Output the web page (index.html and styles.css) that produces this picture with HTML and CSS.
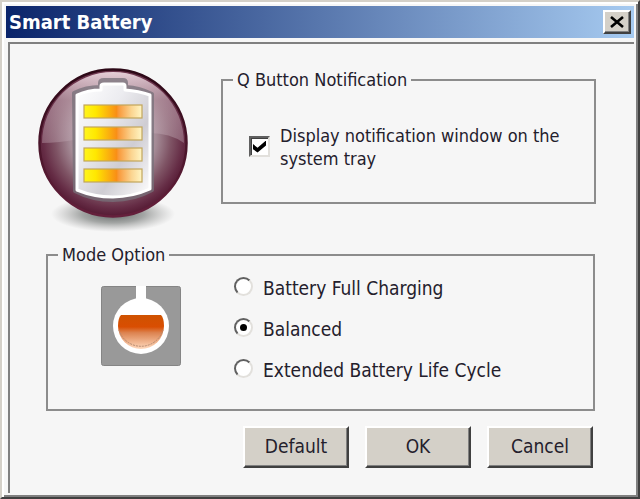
FILE: index.html
```html
<!DOCTYPE html>
<html lang="en">
<head>
  <meta charset="UTF-8">
  <title>Smart Battery</title>
  <meta name="viewport" content="width=device-width, initial-scale=1.0">
  <link rel="stylesheet" href="styles.css">
</head>
<body>
  <div class="window">
    <header class="title-bar">
      <h1>Smart Battery</h1>
      <button type="button" class="close" aria-label="Close">
        <svg width="14" height="12" viewBox="0 0 14 12"><path d="M1 1L13 11M13 1L1 11" stroke="#000" stroke-width="2.6"/></svg>
      </button>
    </header>

    <form class="panel">
      <div class="top">
        <svg class="battery" width="150" height="164" viewBox="0 0 150 164" aria-hidden="true">
          <defs>
            <radialGradient id="shadow">
              <stop offset="0" stop-color="#555b59" stop-opacity=".95"/>
              <stop offset=".5" stop-color="#777b79" stop-opacity=".65"/>
              <stop offset="1" stop-color="#999" stop-opacity="0"/>
            </radialGradient>
            <radialGradient id="ball" cx=".5" cy=".47" r=".53">
              <stop offset="0" stop-color="#b8a4ae"/>
              <stop offset=".55" stop-color="#a58c97"/>
              <stop offset=".74" stop-color="#7f5465"/>
              <stop offset=".9" stop-color="#652c45"/>
              <stop offset="1" stop-color="#541a33"/>
            </radialGradient>
            <linearGradient id="gloss" x1="0" y1="0" x2="0" y2="1">
              <stop offset="0" stop-color="#f3dfe6" stop-opacity=".9"/>
              <stop offset=".4" stop-color="#d0b8c2" stop-opacity=".55"/>
              <stop offset="1" stop-color="#bfa5b1" stop-opacity=".4"/>
            </linearGradient>
            <linearGradient id="rim" x1="0" y1="0" x2="0" y2="1">
              <stop offset="0" stop-color="#2c0816"/>
              <stop offset="1" stop-color="#65203c"/>
            </linearGradient>
            <linearGradient id="shell" x1="0" y1="0" x2="1" y2="1">
              <stop offset="0" stop-color="#fff"/>
              <stop offset=".35" stop-color="#ececf0"/>
              <stop offset=".65" stop-color="#cfcdd3"/>
              <stop offset="1" stop-color="#fff"/>
            </linearGradient>
            <linearGradient id="cell">
              <stop offset="0" stop-color="#fff51e"/>
              <stop offset=".2" stop-color="#ffe800"/>
              <stop offset=".56" stop-color="#f98f16"/>
              <stop offset=".6" stop-color="#f99a3c"/>
              <stop offset=".82" stop-color="#fbd591"/>
              <stop offset="1" stop-color="#fff6c5"/>
            </linearGradient>
          </defs>
          <ellipse cx="75" cy="146" rx="62" ry="18" fill="url(#shadow)"/>
          <circle cx="75" cy="75" r="73.5" fill="url(#ball)" stroke="url(#rim)" stroke-width="2.5"/>
          <path d="M4 75A71 71 0 0 1 146 75Q132 65 112 65Q70 64 42 71Q20 75 4 75Z" fill="url(#gloss)"/>
          <path d="M36 25Q48 19 62 19V15Q62 12 66 12H85Q88 12 88 15V19Q102 20 114 26V122Q96 132 75 132Q54 132 37 123Z" fill="#77717a" opacity=".75" stroke="#77717a" stroke-width="4" stroke-linejoin="round"/>
          <path d="M39 27Q50 22 63 22V18Q63 16 66 16H85Q87 16 87 18V22Q101 23 112 27V121Q94 129 75 129Q56 129 39 122Z" fill="url(#shell)" stroke="#fff" stroke-width="3" stroke-linejoin="round"/>
          <g fill="url(#cell)" stroke="#c2a55a" stroke-width="1.2">
            <rect x="46" y="37" width="58" height="13"/>
            <rect x="46" y="59" width="58" height="13"/>
            <rect x="46" y="80" width="58" height="13"/>
            <rect x="46" y="101" width="58" height="13"/>
          </g>
        </svg>

        <fieldset class="notification">
          <legend>Q Button Notification</legend>
          <input type="checkbox" id="notify" checked>
          <label for="notify">Display notification window on the system tray</label>
        </fieldset>
      </div>

      <fieldset class="mode">
        <legend>Mode Option</legend>
        <svg class="flask" width="80" height="80" viewBox="0 0 80 80" aria-hidden="true">
          <defs>
            <linearGradient id="liquid" x1="0" y1="0" x2="0" y2="1">
              <stop offset="0" stop-color="#cf5200"/>
              <stop offset=".35" stop-color="#d94e02"/>
              <stop offset=".52" stop-color="#dc8350"/>
              <stop offset="1" stop-color="#ffd9bd"/>
            </linearGradient>
          </defs>
          <rect x=".5" y=".5" width="79" height="79" rx="2" fill="#999" stroke="#858585"/>
          <rect x="35" y="0" width="10" height="20" fill="#fff"/>
          <circle cx="40" cy="40" r="28" fill="#fff"/>
          <path d="M20 29H60Q63 32 63 40A23 23 0 0 1 17 40Q17 32 20 29Z" fill="url(#liquid)"/>
          <path d="M18 44A23 23 0 0 0 62 44" fill="none" stroke="#b58a70" stroke-dasharray="2 1"/>
        </svg>
        <div class="options">
          <div class="option">
            <input type="radio" name="mode" id="full">
            <label for="full">Battery Full Charging</label>
          </div>
          <div class="option">
            <input type="radio" name="mode" id="balanced" checked>
            <label for="balanced">Balanced</label>
          </div>
          <div class="option">
            <input type="radio" name="mode" id="extended">
            <label for="extended">Extended Battery Life Cycle</label>
          </div>
        </div>
      </fieldset>

      <div class="actions">
        <button type="reset">Default</button>
        <button type="button">OK</button>
        <button type="button">Cancel</button>
      </div>
    </form>
  </div>
</body>
</html>
```
FILE: styles.css
```css
* {
  box-sizing: border-box;
}

body {
  margin: 0;
  color: #24202c;
  font-family: Tahoma, "DejaVu Sans Condensed", "Noto Sans", sans-serif;
  font-size: 18px;
  line-height: 23px;
}

.window {
  display: flex;
  flex-direction: column;
  gap: 4px;
  min-height: 100vh;
  padding: 4px;
  background-color: #f6f6f6;
  border: 2px solid;
  border-color: #d4d0c8 #404040 #404040 #d4d0c8;
  box-shadow: inset 2px 2px #fff, inset -2px -2px #808080;
}

.title-bar {
  display: flex;
  align-items: center;
  justify-content: space-between;
  height: 32px;
  padding: 0 3px;
  background: linear-gradient(to right, #0a246a, #a6caf0);
}

h1 {
  margin: 0;
  color: #fff;
  font-size: 20px;
  line-height: 30px;
}

button {
  padding: 0;
  color: inherit;
  font: inherit;
  background-color: #d4d0c8;
  border: 2px solid;
  border-color: #fff #404040 #404040 #fff;
  box-shadow: inset -1px -1px #808080;
}

.close {
  display: flex;
  align-items: center;
  justify-content: center;
  width: 28px;
  height: 24px;
}

.panel {
  flex: 1;
  margin-left: 2px;
  padding: 24px 38px 24px 28px;
  border: 2px solid #808080;
  border-width: 2px 0 0 2px;
}

.top {
  display: flex;
  align-items: flex-start;
  gap: 33px;
}

fieldset {
  display: flex;
  min-width: 0;
  margin: 0;
  padding: 0 10px;
  border: 2px solid #8c8c8c;
}

legend {
  padding: 0 4px;
}

.notification {
  flex: 1;
  align-items: center;
  gap: 10px;
  height: 136px;
  padding: 0 16px 0 26px;
}

.notification legend {
  margin-left: -16px;
}

input {
  appearance: none;
  flex: none;
  display: grid;
  place-items: center;
  margin: 0;
  background-color: #fff;
  border: 2px solid;
  border-color: #606060 #e2e0dc #e2e0dc #606060;
}

input[type="checkbox"] {
  width: 21px;
  height: 21px;
  box-shadow: inset 1px 1px #404040;
}

input[type="checkbox"]:checked::before {
  content: "";
  width: 13px;
  height: 12px;
  background-color: #000;
  clip-path: polygon(0 30%, 35% 60%, 100% 0, 100% 42%, 35% 100%, 0 72%);
}

input[type="radio"] {
  width: 19px;
  height: 19px;
  border-radius: 50%;
}

input[type="radio"]:checked::before {
  content: "";
  width: 7px;
  height: 7px;
  background-color: #000;
  border-radius: 50%;
}

.mode {
  height: 168px;
  margin: 11px 1px 0 8px;
}

.flask {
  flex: none;
  margin: 20px 53px 0 43px;
}

.options {
  display: flex;
  flex-direction: column;
  gap: 18px;
  padding-top: 11px;
  font-size: 19px;
}

.option {
  display: flex;
  gap: 10px;
}

.actions {
  display: flex;
  justify-content: flex-end;
  gap: 16px;
  padding: 15px 3px 0 0;
}

.actions button {
  width: 106px;
  height: 42px;
  padding-bottom: 2px;
  font-size: 19px;
}
```
